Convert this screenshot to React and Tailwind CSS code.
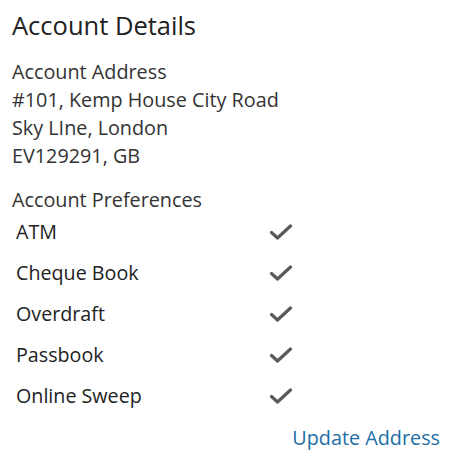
const PREFS = ['ATM', 'Cheque Book', 'Overdraft', 'Passbook', 'Online Sweep']

function Check() {
  return (
    <svg viewBox="0 0 24 16" className="h-[16px] w-[24px]" fill="none">
      <path d="M2.5 8.5 L8.5 14 L21.5 2" stroke="#5a5a5a" strokeWidth="3.2" strokeLinecap="round" strokeLinejoin="round" />
    </svg>
  )
}

export default function App() {
  return (
    <div className="min-h-[465px] w-[453px] bg-white pl-3 pt-[9px] font-['Open_Sans',sans-serif] text-[#222]">
      <h1 className="text-[25.5px] leading-[32px]">Account Details</h1>

      <div className="mt-[17px] text-[19.8px] leading-[28px] text-[#333]">
        <p>Account Address</p>
        <p>#101, Kemp House City Road</p>
        <p>Sky LIne, London</p>
        <p>EV129291, GB</p>
      </div>

      <p className="mt-[16px] text-[19.8px] leading-[28px] text-[#333]">Account Preferences</p>

      <ul className="-mt-[3px] pl-1">
        {PREFS.map((p) => (
          <li key={p} className="flex h-[41px] items-center text-[19.7px] text-[#222]">
            <span className="w-[253px]">{p}</span>
            <Check />
          </li>
        ))}
      </ul>

      <div className="mt-[8px] flex justify-end pr-[13px]">
        <a href="#" className="text-[19.8px] leading-[28px] text-[#1d6fa5]">Update Address</a>
      </div>
    </div>
  )
}
